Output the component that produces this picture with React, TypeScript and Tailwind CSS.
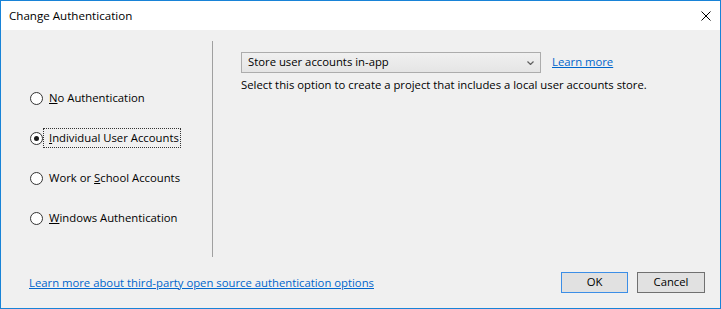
import React from "react"

const font = { fontFamily: '"Open Sans", "Noto Sans", sans-serif' }

function Radio({ checked, label, focus }: { checked?: boolean; label: React.ReactNode; focus?: boolean }) {
    return (
        <div className="flex h-[20px] items-center">
            <div className="flex h-[13px] w-[13px] items-center justify-center rounded-full border border-[#333333] bg-white">
                {checked && <div className="h-[5px] w-[5px] rounded-full bg-[#1a1a1a]" />}
            </div>
            <div
                className={
                    "flex h-[20px] items-center pl-[5px] pr-[1px] " +
                    (focus ? "border border-dotted border-[#333333]" : "border border-transparent")
                }
            >
                {label}
            </div>
        </div>
    )
}

export default function App() {
    return (
        <div
            className="flex h-[309px] w-[721px] flex-col border border-[#1883d7] bg-[#f0f0f0] text-[11.3px] text-black"
            style={font}
        >
            {/* Title bar */}
            <div className="flex h-[29px] items-center justify-between bg-white pl-[8px] pr-[9px]">
                <span className="text-[11.6px]">Change Authentication</span>
                <svg width="10" height="10" viewBox="0 0 10 10">
                    <path d="M0.5 0.5 L9.5 9.5 M9.5 0.5 L0.5 9.5" stroke="#000" strokeWidth="1" />
                </svg>
            </div>

            {/* Main area */}
            <div className="mt-[11px] flex h-[216px]">
                <div className="flex w-[211px] flex-col gap-[20px] pl-[29px] pt-[47px]">
                    <Radio label={<span><u>N</u>o Authentication</span>} />
                    <Radio checked focus label={<span><u>I</u>ndividual User Accounts</span>} />
                    <Radio label={<span>Work or <u>S</u>chool Accounts</span>} />
                    <Radio label={<span><u>W</u>indows Authentication</span>} />
                </div>
                <div className="w-px bg-[#a0a0a0]" />
                <div className="flex flex-col pl-[28px] pt-[11px]">
                    <div className="flex items-center">
                        <div className="flex h-[21px] w-[300px] items-center justify-between border border-[#acacac] bg-gradient-to-b from-[#f0f0f0] to-[#e5e5e5] pl-[6px] pr-[6px]">
                            <span>Store user accounts in-app</span>
                            <svg width="7" height="4" viewBox="0 0 7 4">
                                <path d="M0.5 0.5 L3.5 3.5 L6.5 0.5" stroke="#606060" strokeWidth="1.2" fill="none" />
                            </svg>
                        </div>
                        <a className="ml-[11px] text-[#0066cc] underline">Learn more</a>
                    </div>
                    <div className="mt-[4px]">
                        Select this option to create a project that includes a local user accounts store.
                    </div>
                </div>
            </div>

            {/* Footer */}
            <div className="mt-[15px] flex h-[21px] items-center justify-between pl-[28px] pr-[15px]">
                <a className="pt-[1px] text-[#0066cc] underline">Learn more about third-party open source authentication options</a>
                <div className="flex gap-[9px]">
                    <button className="h-[21px] w-[67px] border border-[#3c8ee6] bg-[#e1e1e1]">OK</button>
                    <button className="h-[21px] w-[68px] border border-[#707070] bg-[#e1e1e1]">Cancel</button>
                </div>
            </div>
        </div>
    )
}
